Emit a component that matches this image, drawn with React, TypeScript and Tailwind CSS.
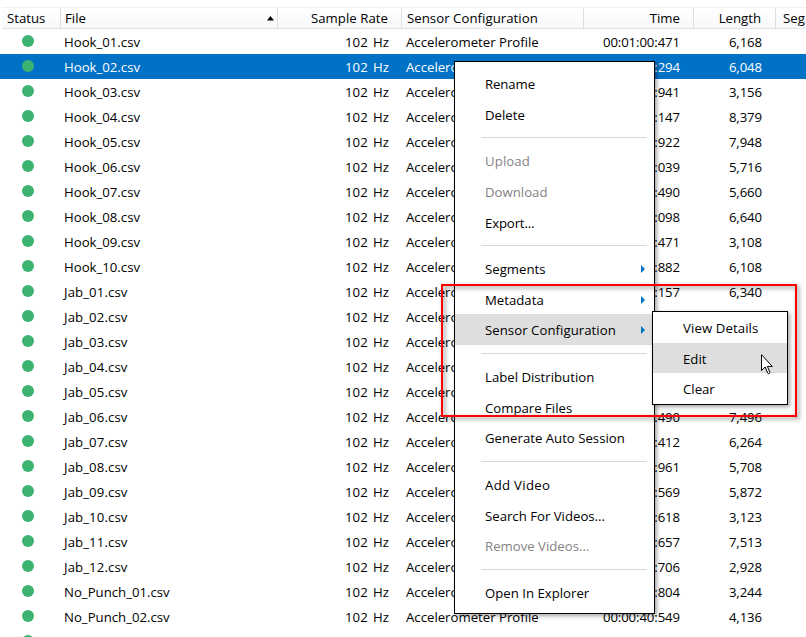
import React from 'react';

type Row = { file: string; time: string; length: string };

const rows: Row[] = [
  { file: 'Hook_01.csv', time: '00:01:00:471', length: '6,168' },
  { file: 'Hook_02.csv', time: '00:00:59:294', length: '6,048' },
  { file: 'Hook_03.csv', time: '00:00:30:941', length: '3,156' },
  { file: 'Hook_04.csv', time: '00:01:22:147', length: '8,379' },
  { file: 'Hook_05.csv', time: '00:01:17:922', length: '7,948' },
  { file: 'Hook_06.csv', time: '00:00:56:039', length: '5,716' },
  { file: 'Hook_07.csv', time: '00:00:55:490', length: '5,660' },
  { file: 'Hook_08.csv', time: '00:01:05:098', length: '6,640' },
  { file: 'Hook_09.csv', time: '00:00:30:471', length: '3,108' },
  { file: 'Hook_10.csv', time: '00:00:59:882', length: '6,108' },
  { file: 'Jab_01.csv', time: '00:01:02:157', length: '6,340' },
  { file: 'Jab_02.csv', time: '', length: '' },
  { file: 'Jab_03.csv', time: '', length: '' },
  { file: 'Jab_04.csv', time: '', length: '' },
  { file: 'Jab_05.csv', time: '', length: '' },
  { file: 'Jab_06.csv', time: '00:01:13:490', length: '7,496' },
  { file: 'Jab_07.csv', time: '00:01:01:412', length: '6,264' },
  { file: 'Jab_08.csv', time: '00:00:55:961', length: '5,708' },
  { file: 'Jab_09.csv', time: '00:00:57:569', length: '5,872' },
  { file: 'Jab_10.csv', time: '00:00:30:618', length: '3,123' },
  { file: 'Jab_11.csv', time: '00:01:13:657', length: '7,513' },
  { file: 'Jab_12.csv', time: '00:00:28:706', length: '2,928' },
  { file: 'No_Punch_01.csv', time: '00:00:31:804', length: '3,244' },
  { file: 'No_Punch_02.csv', time: '00:00:40:549', length: '4,136' },
];

const columns = 'grid grid-cols-[60px_218px_124px_182px_110px_82px_1fr]';

type Entry = { label: string; disabled?: boolean; submenu?: boolean; active?: boolean; short?: boolean; fit?: string };

const groups: { gap: string; entries: Entry[] }[] = [
  { gap: '', entries: [{ label: 'Rename', fit: 'tracking-[-0.1px]' }, { label: 'Delete' }] },
  {
    gap: 'h-[15px] pt-[7px]',
    entries: [
      { label: 'Upload', disabled: true, fit: 'tracking-[0.1px]' },
      { label: 'Download', disabled: true },
      { label: 'Export...', fit: 'tracking-[-0.15px]' },
    ],
  },
  {
    gap: 'h-[15px] pt-[7px]',
    entries: [
      { label: 'Segments', submenu: true },
      { label: 'Metadata', submenu: true, short: true },
      { label: 'Sensor Configuration', submenu: true, active: true, fit: 'tracking-[0.05px]' },
    ],
  },
  {
    gap: 'h-4 pt-2',
    entries: [{ label: 'Label Distribution' }, { label: 'Compare Files', short: true }, { label: 'Generate Auto Session' }],
  },
  {
    gap: 'h-4 pt-2',
    entries: [
      { label: 'Add Video', fit: 'tracking-[0.3px]' },
      { label: 'Search For Videos...', short: true },
      { label: 'Remove Videos...', disabled: true },
    ],
  },
  { gap: 'h-4 pt-2', entries: [{ label: 'Open In Explorer' }] },
];

function Header() {
  return (
    <div className={`${columns} ml-0.5 mt-[7px] h-[22px] -mr-4 border-y border-t-[#f0f0f0] border-b-[#e3e3e3] bg-gradient-to-b from-white to-[#f7f8fa] leading-[21px]`}>
      <div className="w-[59px] border-r border-[#dedfe1] pl-[5px]">Status</div>
      <div className="-ml-0.5 mr-0.5 flex items-center justify-between border-r border-[#dedfe1] pl-[5px] pr-[3px]">
        <span>File</span>
        <svg width="7" height="5" viewBox="0 0 7 5"><path d="M3.5 0 7 4.5H0Z" fill="#000" /></svg>
      </div>
      <div className="-ml-0.5 mr-0.5 border-r border-[#dedfe1] pr-[13px] text-right tracking-[0.05px]">Sample Rate</div>
      <div className="-ml-0.5 mr-0.5 border-r border-[#dedfe1] pl-[5px] tracking-[0.05px]">Sensor Configuration</div>
      <div className="-ml-0.5 mr-0.5 border-r border-[#dedfe1] pr-[13px] text-right">Time</div>
      <div className="-ml-0.5 mr-0.5 border-r border-[#dedfe1] pr-[14px] text-right">Length</div>
      <div className="pl-[5px]">Seg</div>
    </div>
  );
}

function Dot() {
  return <span className="block size-3 rounded-full bg-[#3cb371]" />;
}

function Menu() {
  return (
    <div className="absolute left-[454px] top-[61px] h-[553px] w-[201px] border border-black bg-white pt-1.5 shadow-[2px_2px_4px_rgba(0,0,0,0.35)]">
      {groups.map((group, g) => (
        <React.Fragment key={g}>
          {g > 0 && (
            <div className={group.gap}>
              <div className="ml-[26px] h-px w-[166px] bg-[#d7d7d7]" />
            </div>
          )}
          {group.entries.map((e) => (
            <div
              key={e.label}
              className={`flex items-start justify-between pl-[30px] pr-[9px] pt-[7px] leading-[18px] ${e.short ? 'h-[30px]' : 'h-[31px]'} ${e.active ? 'bg-[#dedede]' : ''} ${e.disabled ? 'text-[#838383]' : ''}`}
            >
              <span className={e.fit}>{e.label}</span>
              {e.submenu && (
                <svg width="4" height="8" viewBox="0 0 4 8" className="mt-[5px]"><path d="M0 0 4 4 0 8Z" fill="#0072c6" /></svg>
              )}
            </div>
          ))}
        </React.Fragment>
      ))}
    </div>
  );
}

function Submenu() {
  return (
    <div className="absolute left-[652px] top-[311px] h-[94px] w-[136px] border border-black bg-white leading-[18px] shadow-[2px_2px_4px_rgba(0,0,0,0.35)]">
      <div className="flex h-[31px] items-center pl-[30px] pt-px tracking-[0.1px]">View Details</div>
      <div className="flex h-[30px] items-center bg-[#dedede] pl-[30px] pt-[2px]">Edit</div>
      <div className="flex h-[31px] items-center pl-[30px] pt-px">Clear</div>
    </div>
  );
}

function Cursor() {
  return (
    <svg className="absolute left-[761px] top-[354px]" width="12" height="21" viewBox="0 0 12 21">
      <path d="M.5.7V16.5L4.2 13l2.5 6.1c.4 1.2 2.7.5 2.2-.8L6.4 12.4h4.9Z" fill="#fff" stroke="#000" strokeWidth="1" />
    </svg>
  );
}

export default function App() {
  return (
    <div className="relative h-[637px] w-[806px] overflow-hidden bg-white font-['Open_Sans','Noto_Sans',sans-serif] text-[13.2px] text-black">
      <Header />
      {rows.map((r, i) => (
        <div key={r.file} className={`${columns} h-[25px] whitespace-pre pt-[3px] leading-[20px] ${i === 1 ? 'bg-[#0072c6] text-white' : ''}`}>
          <div className="pl-[22px] pt-[3px]"><Dot /></div>
          <div className={`pl-1 ${r.file.startsWith('Jab') ? 'tracking-[0.1px]' : ''}`}>{r.file}</div>
          <div className="pr-[13px] text-right [word-spacing:2px]">102 Hz</div>
          <div className="pl-1">Accelerometer Profile</div>
          <div className="pr-[14px] text-right tracking-[-0.1px]">{r.time}</div>
          <div className="pr-[14px] text-right tracking-[-0.1px]">{r.length}</div>
        </div>
      ))}
      <div className="pl-[22px] pt-1.5"><Dot /></div>
      <Menu />
      <Submenu />
      <div className="absolute left-[441px] top-[284px] h-[133px] w-[356px] border-2 border-[#ff0000] drop-shadow-[2px_2px_2px_rgba(0,0,0,0.5)]" />
      <Cursor />
    </div>
  );
}
